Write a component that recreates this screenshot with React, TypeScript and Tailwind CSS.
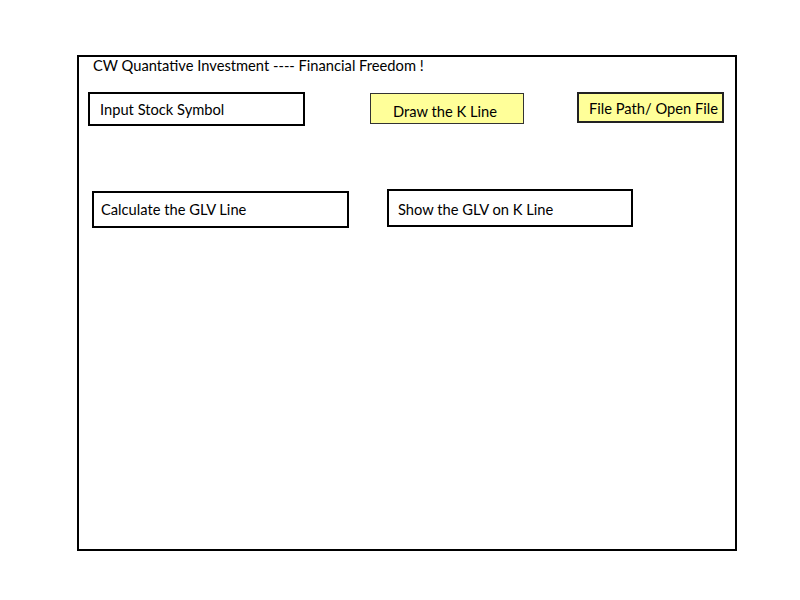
import React from "react";

const font = { fontFamily: "Lato, 'Open Sans', sans-serif" };

export default function App() {
  return (
    <div className="w-[800px] h-[600px] bg-white text-black text-[14.7px]" style={font}>
      <div className="relative top-[55px] left-[77px] w-[660px] h-[496px] border-2 border-black">
        {/* title */}
        <div className="h-[20px] pl-[14px] leading-[17px]">CW Quantative Investment ---- Financial Freedom !</div>

        {/* first row of actions */}
        <div className="flex items-start mt-[15px]">
          <div className="ml-[9px] w-[217px] h-[34px] border-2 border-black flex items-center pl-[10px]">
            Input Stock Symbol
          </div>
          <div className="ml-[65px] mt-[1px] w-[154px] h-[31px] border border-[#333] bg-[#ffff99] flex items-center justify-center pt-[6px] pr-[4px]">
            Draw the K Line
          </div>
          <div className="ml-[53px] w-[147px] h-[31px] border-2 border-[#222] bg-[#ffff99] flex items-center pl-[10px] pt-[1px]">
            File Path/ Open File
          </div>
        </div>

        {/* second row */}
        <div className="flex items-start mt-[63px]">
          <div className="ml-[13px] mt-[2px] w-[257px] h-[37px] border-2 border-black flex items-center pl-[7px]">
            Calculate the GLV Line
          </div>
          <div className="ml-[38px] w-[246px] h-[38px] border-2 border-black flex items-center pl-[9px] pt-[2px]">
            Show the GLV on K Line
          </div>
        </div>
      </div>
    </div>
  );
}
